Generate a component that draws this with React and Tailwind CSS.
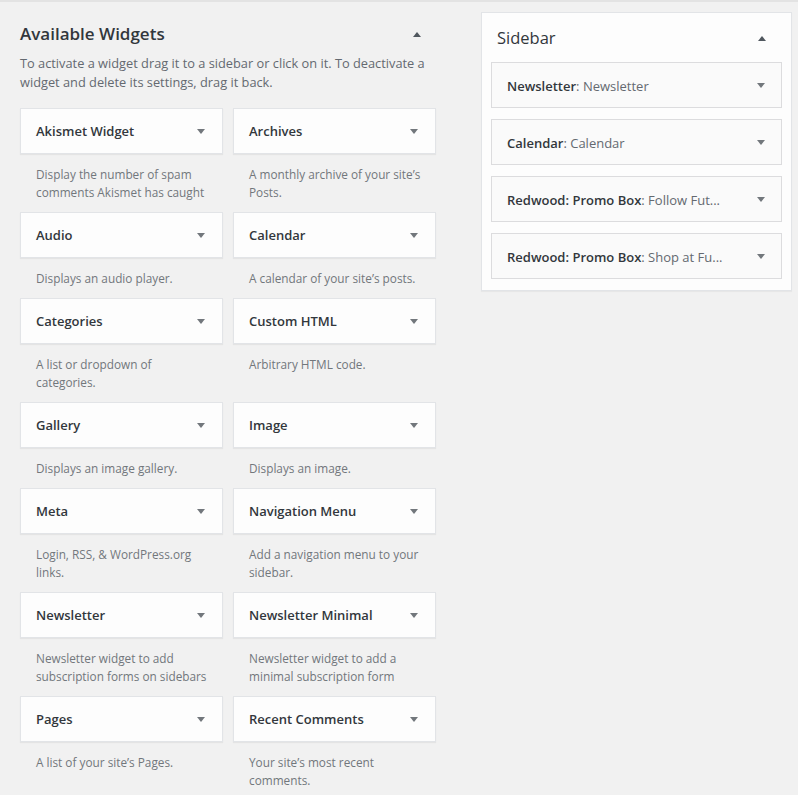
import React from "react";

const widgets = [
  ["Akismet Widget", "Display the number of spam comments Akismet has caught"],
  ["Archives", "A monthly archive of your site\u2019s Posts."],
  ["Audio", "Displays an audio player."],
  ["Calendar", "A calendar of your site\u2019s posts."],
  ["Categories", "A list or dropdown of categories."],
  ["Custom HTML", "Arbitrary HTML code."],
  ["Gallery", "Displays an image gallery."],
  ["Image", "Displays an image."],
  ["Meta", "Login, RSS, & WordPress.org links."],
  ["Navigation Menu", "Add a navigation menu to your sidebar."],
  ["Newsletter", "Newsletter widget to add subscription forms on sidebars"],
  ["Newsletter Minimal", "Newsletter widget to add a minimal subscription form"],
  ["Pages", "A list of your site\u2019s Pages."],
  ["Recent Comments", "Your site\u2019s most recent comments."],
];

const sidebarItems = [
  ["Newsletter", "Newsletter"],
  ["Calendar", "Calendar"],
  ["Redwood: Promo Box", "Follow Fut..."],
  ["Redwood: Promo Box", "Shop at Fu..."],
];

function Arrow({ up = false, className = "" }) {
  return (
    <svg width="8" height="5" viewBox="0 0 8 5" className={className}>
      {up ? (
        <path d="M0 5 L4 0 L8 5 Z" fill="currentColor" />
      ) : (
        <path d="M0 0 L8 0 L4 5 Z" fill="currentColor" />
      )}
    </svg>
  );
}

function WidgetCard({ title, desc }) {
  return (
    <div>
      <div className="h-[46px] flex items-center justify-between pl-[15px] pr-[17px] bg-[#fdfdfd] border border-[#e2e4e7] shadow-[0_1px_1px_rgba(0,0,0,0.05)]">
        <span className="pt-[2px] text-[13px] font-semibold text-[#32373c]">{title}</span>
        <Arrow className="text-[#72777c]" />
      </div>
      <p className="pt-[11px] pb-[11px] pl-4 pr-3 text-[11.8px] leading-[18px] text-[#72777c]">
        {desc}
      </p>
    </div>
  );
}

export default function App() {
  return (
    <div
      className="w-[798px] h-[795px] bg-[#f1f1f1] border-t-2 border-[#e3e3e3] flex flex-col"
      style={{ fontFamily: '"Open Sans", "Noto Sans", sans-serif' }}
    >
      <div className="flex flex-1">
        <div className="w-[436px] pl-5 pt-5">
          <div className="flex items-center justify-between h-6 pr-[15px]">
            <h2 className="text-[17px] font-semibold text-[#32373c]">Available Widgets</h2>
            <Arrow up className="text-[#50575e]" />
          </div>
          <p className="mt-[8px] text-[12.8px] leading-[19px] text-[#646970]">
            To activate a widget drag it to a sidebar or click on it. To deactivate a
            widget and delete its settings, drag it back.
          </p>
          <div className="mt-[16px] grid grid-cols-2 gap-x-[10px]">
            {widgets.map(([t, d]) => (
              <WidgetCard key={t} title={t} desc={d} />
            ))}
          </div>
        </div>
        <div className="ml-[45px] mt-[10px] w-[311px] self-start bg-[#fdfdfd] border border-[#e2e4e7] shadow-[0_1px_1px_rgba(0,0,0,0.04)] px-[9px] pb-[11px]">
          <div className="flex items-center justify-between h-6 mt-[13px] mb-3 pl-[6px] pr-[16px]">
            <h3 className="text-[16.5px] text-[#32373c]">Sidebar</h3>
            <Arrow up className="text-[#50575e]" />
          </div>
          <div className="flex flex-col gap-[11px]">
            {sidebarItems.map(([a, b], i) => (
              <div
                key={i}
                className="h-[46px] flex items-center justify-between pl-[15px] pr-[16px] bg-[#fafafa] border border-[#dcdcde]"
              >
                <span className="pt-[3px] text-[13px] text-[#32373c] whitespace-nowrap">
                  <span className="font-semibold">{a}</span>
                  <span className="text-[#646970]">: {b}</span>
                </span>
                <Arrow className="text-[#72777c]" />
              </div>
            ))}
          </div>
        </div>
      </div>
      <div className="h-1 bg-white" />
    </div>
  );
}
